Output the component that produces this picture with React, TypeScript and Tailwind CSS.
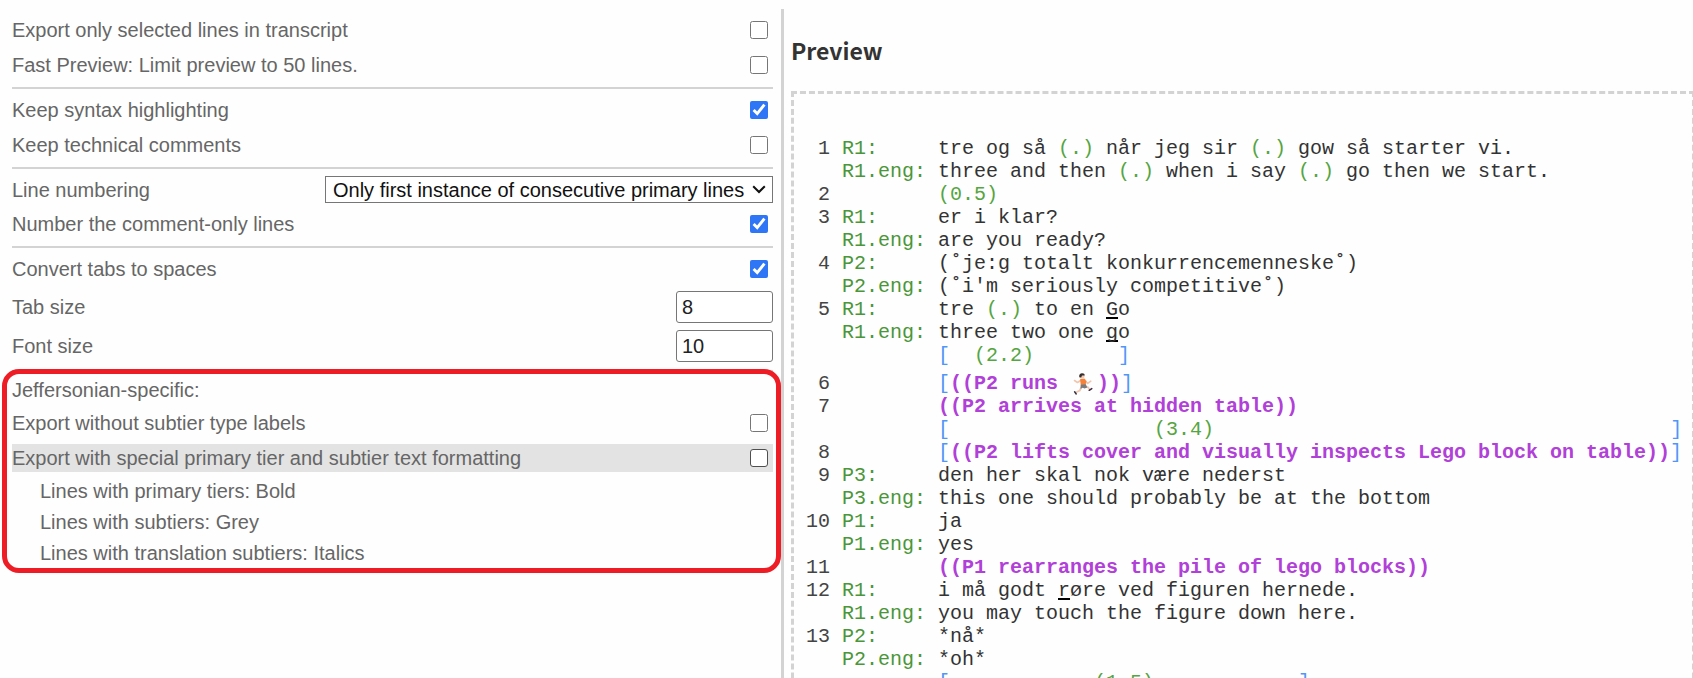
import type { ReactNode } from "react";

function Check({ id, checked = false, hovered = false }: { id: string; checked?: boolean; hovered?: boolean }) {
  return (
    <input
      id={id}
      type="checkbox"
      defaultChecked={checked}
      className={
        hovered
          ? "mr-[5px] size-[18px] shrink-0 appearance-none rounded-[3px] border border-[#4f4f4f] bg-white checked:bg-[#2f76f6]"
          : "mr-[5px] size-[18px] shrink-0 accent-[#2f76f6]"
      }
    />
  );
}

function CheckRow({ id, label, checked, hovered }: { id: string; label: string; checked?: boolean; hovered?: boolean }) {
  return (
    <div className={hovered ? "flex h-7 items-center justify-between bg-[#e3e3e3]" : "flex h-7 items-center justify-between"}>
      <label htmlFor={id}>{label}</label>
      <Check id={id} checked={checked} hovered={hovered} />
    </div>
  );
}

function NumberRow({ id, label, value }: { id: string; label: string; value: string }) {
  return (
    <div className="flex h-8 items-center justify-between">
      <label htmlFor={id}>{label}</label>
      <input
        id={id}
        type="text"
        inputMode="numeric"
        defaultValue={value}
        className="h-8 w-[97px] rounded-[3px] border border-[#767676] bg-white px-[5px] text-[#222]"
      />
    </div>
  );
}

function Divider() {
  return <hr className="mt-px border-0 border-t-2 border-[#d3d3d3]" />;
}

function Options() {
  return (
    <form className="flex w-[46.13%] shrink-0 flex-col gap-[7px] pt-[7px] pr-2 pl-3 text-[20px] leading-6 text-[#666]">
      <CheckRow id="selected" label="Export only selected lines in transcript" />
      <CheckRow id="fast" label="Fast Preview: Limit preview to 50 lines." />
      <Divider />
      <CheckRow id="syntax" label="Keep syntax highlighting" checked />
      <CheckRow id="technical" label="Keep technical comments" />
      <Divider />
      <div className="flex h-[27px] items-center justify-between">
        <label htmlFor="numbering">Line numbering</label>
        <div className="relative">
          <select
            id="numbering"
            className="block h-[27px] w-[448px] appearance-none border border-[#767676] bg-white pl-[7px] text-[#111]"
          >
            <option>Only first instance of consecutive primary lines</option>
          </select>
          <svg viewBox="0 0 14 9" className="pointer-events-none absolute top-[9px] right-[7px] h-[9px] w-[14px]" aria-hidden="true">
            <path d="M1.200 1.200 7 7 12.800 1.200" fill="none" stroke="#111" strokeWidth="2" />
          </svg>
        </div>
      </div>
      <CheckRow id="comments" label="Number the comment-only lines" checked />
      <Divider />
      <CheckRow id="tabs" label="Convert tabs to spaces" checked />
      <div className="flex flex-col gap-[7px] pt-px">
        <NumberRow id="tabsize" label="Tab size" value="8" />
        <NumberRow id="fontsize" label="Font size" value="10" />
      </div>
      <Divider />
      <section className="relative flex flex-col gap-[7px]">
        <h3 className="leading-[23px]">Jeffersonian-specific:</h3>
        <CheckRow id="labels" label="Export without subtier type labels" />
        <CheckRow id="formatting" label="Export with special primary tier and subtier text formatting" hovered />
        <ul className="flex flex-col gap-[7px] pl-7">
          <li>Lines with primary tiers: Bold</li>
          <li>Lines with subtiers: Grey</li>
          <li>Lines with translation subtiers: Italics</li>
        </ul>
        <div className="pointer-events-none absolute -top-[10px] -right-2 -bottom-2 -left-[10px] rounded-[17px] border-[5px] border-[#ee1c25]" />
      </section>
    </form>
  );
}

function Pause({ children }: { children: ReactNode }) {
  return <span className="text-[#55a541]">{children}</span>;
}

function Overlap({ children }: { children: ReactNode }) {
  return <span className="text-[#4f96f8]">{children}</span>;
}

function Comment({ children }: { children: ReactNode }) {
  return <b className="font-bold text-[#b040d8]">{children}</b>;
}

function Stress({ children }: { children: ReactNode }) {
  return <u className="decoration-black decoration-2 underline-offset-2 [text-decoration-skip-ink:none]">{children}</u>;
}

function Runner() {
  return (
    <svg viewBox="0 0 27 24" className="inline-block h-6 w-[27px] align-middle" role="img" aria-label="runner">
      <g fill="none" strokeLinecap="round" strokeLinejoin="round">
        <path d="M10.500 8.500 7.500 10.500 4.500 8.500" stroke="#f0c6ae" strokeWidth="1.600" />
        <path d="M15 8 17.500 11.500 20.800 9.200" stroke="#f0c6ae" strokeWidth="1.600" />
        <path d="M11.500 15 9.800 18.500 5.800 20.500" stroke="#f0c6ae" strokeWidth="1.800" />
        <path d="M15 14.500 17.800 15.200 19.800 17.500" stroke="#f0c6ae" strokeWidth="1.800" />
        <path d="M4.600 19.800 6.200 22" stroke="#3a3340" strokeWidth="1.500" />
        <path d="M19.200 18.300 21.800 16.600" stroke="#3a2840" strokeWidth="1.500" />
      </g>
      <path d="M10 7.200 14.500 6.500 16.300 9.500 15.600 13 10.800 13.400z" fill="#f58238" />
      <path d="M10.700 12.700 15.800 12.300 17.300 15.600 14.500 16.500 12.800 15.800 10.500 16.800z" fill="#777b80" />
      <circle cx="12" cy="4.300" r="2.500" fill="#f3cbb4" />
      <path d="M9.300 5.200C8.800 2.600 10.300 1.200 12.200 1.300 13.900 1.300 14.800 2.200 14.700 3.400L12 3.600 11.200 5.500z" fill="#35302f" />
    </svg>
  );
}

const lines: { n?: number; speaker?: string; body: ReactNode }[] = [
  { n: 1, speaker: "R1:", body: <>tre og så <Pause>(.)</Pause> når jeg sir <Pause>(.)</Pause> gow så starter vi.</> },
  { speaker: "R1.eng:", body: <>three and then <Pause>(.)</Pause> when i say <Pause>(.)</Pause> go then we start.</> },
  { n: 2, body: <Pause>(0.5)</Pause> },
  { n: 3, speaker: "R1:", body: "er i klar?" },
  { speaker: "R1.eng:", body: "are you ready?" },
  { n: 4, speaker: "P2:", body: "(˚je:g totalt konkurrencemenneske˚)" },
  { speaker: "P2.eng:", body: "(˚i'm seriously competitive˚)" },
  { n: 5, speaker: "R1:", body: <>tre <Pause>(.)</Pause> to en <Stress>G</Stress>o</> },
  { speaker: "R1.eng:", body: <>three two one <Stress>g</Stress>o</> },
  { body: <><Overlap>[</Overlap>{"  "}<Pause>(2.2)</Pause>{"       "}<Overlap>]</Overlap></> },
  { n: 6, body: <><Overlap>[</Overlap><Comment>((P2 runs <Runner />))</Comment><Overlap>]</Overlap></> },
  { n: 7, body: <Comment>((P2 arrives at hidden table))</Comment> },
  { body: <><Overlap>[</Overlap>{" ".repeat(17)}<Pause>(3.4)</Pause>{" ".repeat(38)}<Overlap>]</Overlap></> },
  { n: 8, body: <><Overlap>[</Overlap><Comment>((P2 lifts cover and visually inspects Lego block on table))</Comment><Overlap>]</Overlap></> },
  { n: 9, speaker: "P3:", body: "den her skal nok være nederst" },
  { speaker: "P3.eng:", body: "this one should probably be at the bottom" },
  { n: 10, speaker: "P1:", body: "ja" },
  { speaker: "P1.eng:", body: "yes" },
  { n: 11, body: <Comment>((P1 rearranges the pile of lego blocks))</Comment> },
  { n: 12, speaker: "R1:", body: <>i må godt <Stress>r</Stress>øre ved figuren hernede.</> },
  { speaker: "R1.eng:", body: "you may touch the figure down here." },
  { n: 13, speaker: "P2:", body: "*nå*" },
  { speaker: "P2.eng:", body: "*oh*" },
  { body: <><Overlap>[</Overlap>{" ".repeat(12)}<Pause>(1.5)</Pause>{" ".repeat(12)}<Overlap>]</Overlap></> },
];

function Transcript() {
  return (
    <div className="border-[3px] border-dashed border-[#d3d3d3] pt-[43px] pr-2 pb-11 pl-3 font-['Courier_New','Liberation_Mono',monospace] text-[20px] leading-[23px] text-[#333]">
      {lines.map((line, i) => (
        <div key={i} className={line.n === 6 ? "flex h-7 items-end whitespace-pre" : "flex h-[23px] whitespace-pre"}>
          <span className="w-6 shrink-0 text-right text-[#444]">{line.n}</span>
          <span className="ml-3 w-24 shrink-0 text-[#4a9638]">{line.speaker}</span>
          <span className="h-[23px]">{line.body}</span>
        </div>
      ))}
    </div>
  );
}

export default function App() {
  return (
    <main className="flex h-screen overflow-hidden bg-[#fefefe] pt-[9px] font-['Liberation_Sans',Arial,sans-serif]">
      <Options />
      <section className="-mr-0.5 min-w-0 flex-1 border-l-[3px] border-[#d3d3d3] pl-[7px]">
        <h2 className="py-6 font-['Noto_Sans_CJK_JP',sans-serif] text-[23px] leading-[34px] font-bold text-[#333]">Preview</h2>
        <Transcript />
      </section>
    </main>
  );
}
